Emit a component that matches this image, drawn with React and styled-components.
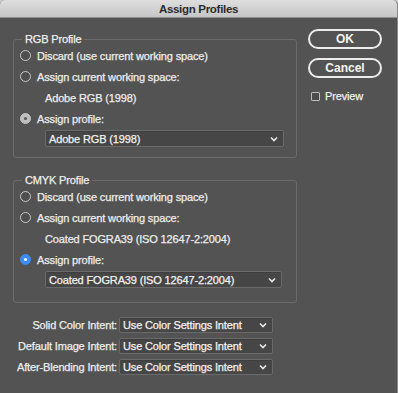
import React from 'react';
import styled, { createGlobalStyle } from 'styled-components';

const GlobalStyle = createGlobalStyle`
    html, body {
        margin: 0;
        padding: 0;
        background: #cfc9c9;
    }
    * {
        box-sizing: border-box;
    }
`;

const Window = styled.div`
    width: 398px;
    height: 393px;
    background: #535353;
    border-radius: 5px 5px 0 0;
    overflow: hidden;
    border-right: 1px solid #8a8a8a;
    font-family: "Liberation Sans", Arial, sans-serif;
    font-size: 11px;
    letter-spacing: -0.15px;
    -webkit-text-stroke: 0.25px currentColor;
    color: #ededed;
    display: flex;
    flex-direction: column;
`;

const TitleBar = styled.div`
    height: 18px;
    flex: none;
    background: linear-gradient(#dedede, #c6c6c6);
    border-bottom: 1px solid #8f8f8f;
    display: flex;
    align-items: center;
    justify-content: center;
    font-weight: bold;
    font-size: 11.5px;
    letter-spacing: -0.3px;
    -webkit-text-stroke: 0;
    color: #2b2b2b;
`;

const Main = styled.div`
    display: flex;
    align-items: flex-start;
    padding: 11px 0 0 13px;
`;

const LeftColumn = styled.div`
    width: 284px;
    padding-top: 4px;
    display: flex;
    flex-direction: column;
`;

const RightColumn = styled.div`
    width: 74px;
    margin-left: 11px;
    display: flex;
    flex-direction: column;
`;

const Group = styled.fieldset`
    margin: 0 0 ${({ $gap }) => $gap || 0}px 0;
    padding: 0 0 ${({ $bottom }) => $bottom}px 0;
    border: 1px solid #6c6c6c;
    border-radius: 3px;
    min-width: 0;
`;

const Legend = styled.legend`
    margin-left: 8px;
    padding: 0 3px;
    line-height: 12px;
    color: #f0f0f0;
`;

const RadioRow = styled.label`
    height: 21px;
    display: flex;
    align-items: center;
    padding-left: 6px;
    gap: 6px;
`;

const Radio = styled.span`
    width: 11px;
    height: 11px;
    border-radius: 50%;
    flex: none;
    position: relative;
    -webkit-text-stroke: 0;
    border: 1px solid ${({ $state }) => ($state === 'blue' ? '#3b8df0' : $state === 'gray' ? '#c4c4c4' : '#c8c8c8')};
    background: ${({ $state }) => ($state === 'blue' ? '#3b8df0' : $state === 'gray' ? '#bebebe' : '#4e4e4e')};

    &::after {
        content: '';
        display: ${({ $state }) => ($state ? 'block' : 'none')};
        position: absolute;
        left: 3px;
        top: 3px;
        width: 3px;
        height: 3px;
        border-radius: 50%;
        background: ${({ $state }) => ($state === 'blue' ? '#ffffff' : '#555555')};
    }
`;

const InfoText = styled.div`
    height: 21px;
    display: flex;
    align-items: center;
    padding-left: 31px;
`;

const SelectBox = styled.div`
    width: ${({ $width }) => $width}px;
    height: ${({ $height }) => $height || 17}px;
    margin-left: ${({ $indent }) => $indent || 0}px;
    margin-top: ${({ $top }) => $top || 0}px;
    background: #464646;
    border: 1px solid #6a6a6a;
    border-radius: 2px;
    box-shadow: inset 0 1px 0 #3e3e3e;
    display: flex;
    align-items: center;
    justify-content: space-between;
    padding: 0 5px 0 3px;
    color: #f2f2f2;
    white-space: nowrap;
`;

const Chevron = () => (
    <svg width="8" height="6" viewBox="0 0 8 6">
        <polyline points="1,1.5 4,4.5 7,1.5" fill="none" stroke="#e8e8e8" strokeWidth="1.6" />
    </svg>
);

const Select = ({ value, ...rest }) => (
    <SelectBox {...rest}>
        <span>{value}</span>
        <Chevron />
    </SelectBox>
);

const IntentGrid = styled.div`
    display: grid;
    grid-template-columns: 104px 154px;
    column-gap: 2px;
    grid-auto-rows: 21px;
    align-items: center;
    margin-top: 11px;
`;

const IntentLabel = styled.div`
    text-align: right;
    white-space: nowrap;
`;

const Button = styled.button`
    width: 74px;
    height: 20px;
    margin-bottom: ${({ $gap }) => $gap || 0}px;
    background: transparent;
    border: 2px solid #ececec;
    border-radius: 10px;
    color: #f4f4f4;
    font-family: inherit;
    font-size: 12px;
    font-weight: bold;
    letter-spacing: 0;
    -webkit-text-stroke: 0;
    padding: 0;
    display: flex;
    align-items: center;
    justify-content: center;
`;

const CheckRow = styled.label`
    display: flex;
    align-items: center;
    gap: 5px;
    margin-top: 12px;
    padding-left: 3px;
`;

const CheckBox = styled.span`
    width: 9px;
    height: 9px;
    border: 1px solid #bcbcbc;
    border-radius: 1px;
    background: #4c4c4c;
    -webkit-text-stroke: 0;
`;

const intents = ['Solid Color Intent:', 'Default Image Intent:', 'After-Blending Intent:'];

const App = () => (
    <>
        <GlobalStyle />
        <Window>
            <TitleBar>Assign Profiles</TitleBar>
            <Main>
                <LeftColumn>
                    <Group $gap={16} $bottom={10}>
                        <Legend>RGB Profile</Legend>
                        <RadioRow><Radio />Discard (use current working space)</RadioRow>
                        <RadioRow><Radio />Assign current working space:</RadioRow>
                        <InfoText>Adobe RGB (1998)</InfoText>
                        <RadioRow><Radio $state="gray" />Assign profile:</RadioRow>
                        <Select value="Adobe RGB (1998)" $width={239} $indent={31} $top={1} />
                    </Group>
                    <Group $bottom={14}>
                        <Legend>CMYK Profile</Legend>
                        <RadioRow><Radio />Discard (use current working space)</RadioRow>
                        <RadioRow><Radio />Assign current working space:</RadioRow>
                        <InfoText>Coated FOGRA39 (ISO 12647-2:2004)</InfoText>
                        <RadioRow><Radio $state="blue" />Assign profile:</RadioRow>
                        <Select value="Coated FOGRA39 (ISO 12647-2:2004)" $width={237} $indent={31} $top={1} />
                    </Group>
                    <IntentGrid>
                        {intents.map((label) => (
                            <React.Fragment key={label}>
                                <IntentLabel>{label}</IntentLabel>
                                <Select value="Use Color Settings Intent" $width={154} $height={16} />
                            </React.Fragment>
                        ))}
                    </IntentGrid>
                </LeftColumn>
                <RightColumn>
                    <Button $gap={9}>OK</Button>
                    <Button>Cancel</Button>
                    <CheckRow><CheckBox />Preview</CheckRow>
                </RightColumn>
            </Main>
        </Window>
    </>
);

export default App;
